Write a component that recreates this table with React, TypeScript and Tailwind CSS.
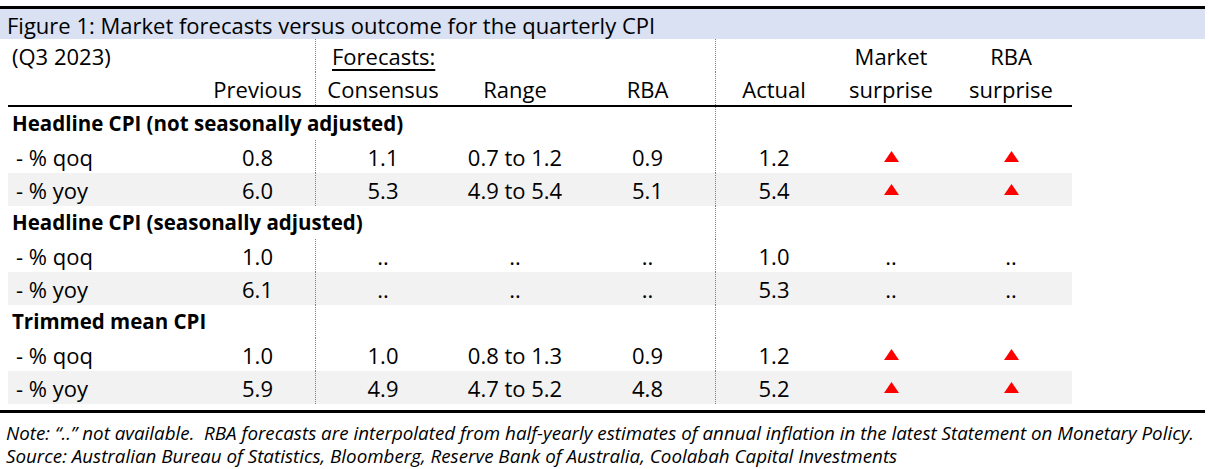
const COLS = "grid grid-cols-[192px_115px_135px_130px_135px_117px_118px_122px]";
const DOT = "border-l border-dotted border-[#7f7f7f]";

type Row = {
  label: string;
  prev: string;
  cons: string;
  range: string;
  rba: string;
  actual: string;
  market: string;
  rbaSurprise: string;
  shaded?: boolean;
};

type Section = { title: string; overflow: boolean; rows: Row[] };

const sections: Section[] = [
  {
    title: "Headline CPI (not seasonally adjusted)",
    overflow: true,
    rows: [
      { label: "- % qoq", prev: "0.8", cons: "1.1", range: "0.7 to 1.2", rba: "0.9", actual: "1.2", market: "up", rbaSurprise: "up" },
      { label: "- % yoy", prev: "6.0", cons: "5.3", range: "4.9 to 5.4", rba: "5.1", actual: "5.4", market: "up", rbaSurprise: "up", shaded: true },
    ],
  },
  {
    title: "Headline CPI (seasonally adjusted)",
    overflow: true,
    rows: [
      { label: "- % qoq", prev: "1.0", cons: "..", range: "..", rba: "..", actual: "1.0", market: "..", rbaSurprise: ".." },
      { label: "- % yoy", prev: "6.1", cons: "..", range: "..", rba: "..", actual: "5.3", market: "..", rbaSurprise: "..", shaded: true },
    ],
  },
  {
    title: "Trimmed mean CPI",
    overflow: false,
    rows: [
      { label: "- % qoq", prev: "1.0", cons: "1.0", range: "0.8 to 1.3", rba: "0.9", actual: "1.2", market: "up", rbaSurprise: "up" },
      { label: "- % yoy", prev: "5.9", cons: "4.9", range: "4.7 to 5.2", rba: "4.8", actual: "5.2", market: "up", rbaSurprise: "up", shaded: true },
    ],
  },
];

function UpArrow() {
  return (
    <svg width="15" height="11" viewBox="0 0 15 11">
      <polygon points="7.5,0 15,11 0,11" fill="#ff0000" />
    </svg>
  );
}

function Cell({ value, className = "" }: { value: string; className?: string }) {
  return (
    <div className={`flex items-center justify-center ${className}`}>
      {value === "up" ? <UpArrow /> : value}
    </div>
  );
}

function DataRow({ row }: { row: Row }) {
  return (
    <div className={`${COLS} h-[33px] ${row.shaded ? "bg-[#f2f2f2]" : ""}`}>
      <div className="flex items-center pl-[8px]">{row.label}</div>
      <Cell value={row.prev} />
      <Cell value={row.cons} className={DOT} />
      <Cell value={row.range} />
      <Cell value={row.rba} />
      <Cell value={row.actual} className={DOT} />
      <Cell value={row.market} />
      <Cell value={row.rbaSurprise} />
    </div>
  );
}

function SectionRow({ section }: { section: Section }) {
  return (
    <div className={`${COLS} h-[33px]`}>
      {section.overflow ? (
        <div className="col-span-5 flex items-center pl-[4px] whitespace-nowrap font-bold text-[20.5px]">
          {section.title}
        </div>
      ) : (
        <>
          <div className="col-span-2 flex items-center pl-[4px] whitespace-nowrap font-bold text-[20.5px]">
            {section.title}
          </div>
          <div className={`col-span-3 ${DOT}`} />
        </>
      )}
      <div className={DOT} />
      <div />
      <div />
    </div>
  );
}

export default function App() {
  return (
    <div className="w-[1209px] h-[469px] bg-white text-black font-['Open_Sans',sans-serif] text-[22px] leading-none">
      <div className="h-[6px]" />
      <div className="w-[1205px] h-[33px] border-t-[3px] border-black bg-[#d9e1f2] flex items-center pl-[7px] pt-[1px]">
        Figure 1: Market forecasts versus outcome for the quarterly CPI
      </div>

      <div className="ml-[8px] w-[1064px]">
        <div className={`${COLS} h-[33px]`}>
          <div className="flex items-center pl-[4px]">(Q3 2023)</div>
          <div />
          <div className={`flex items-center pl-[16px] ${DOT}`}>
            <span className="underline underline-offset-[4px] decoration-[1.5px]">Forecasts:</span>
          </div>
          <div />
          <div />
          <div className={DOT} />
          <Cell value="Market" />
          <Cell value="RBA" />
        </div>
        <div className={`${COLS} h-[35px] border-b-2 border-black`}>
          <Cell value="" />
          <Cell value="Previous" />
          <Cell value="Consensus" className={DOT} />
          <Cell value="Range" />
          <Cell value="RBA" />
          <Cell value="Actual" className={DOT} />
          <Cell value="surprise" />
          <Cell value="surprise" />
        </div>

        {sections.map((s) => (
          <div key={s.title}>
            <SectionRow section={s} />
            {s.rows.map((r) => (
              <DataRow key={s.title + r.label} row={r} />
            ))}
          </div>
        ))}
      </div>

      <div className="h-[6px]" />
      <div className="w-[1205px] border-t-[3px] border-black" />
      <div className="pl-[6px] pt-[9px] italic text-[18.8px] leading-[23px]">
        <p>
          Note: “..” not available.&nbsp; RBA forecasts are interpolated from half-yearly estimates of annual inflation in the latest Statement on Monetary Policy.
        </p>
        <p>Source: Australian Bureau of Statistics, Bloomberg, Reserve Bank of Australia, Coolabah Capital Investments</p>
      </div>
    </div>
  );
}
